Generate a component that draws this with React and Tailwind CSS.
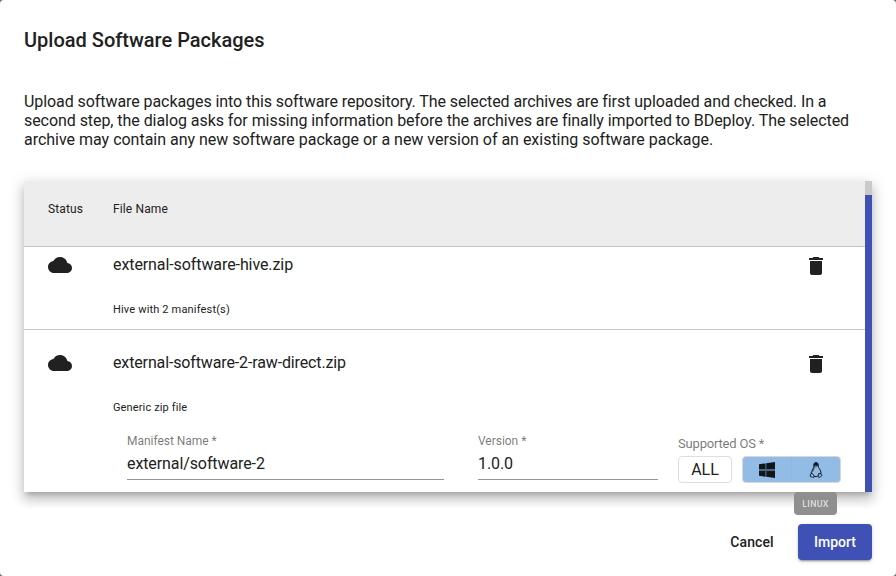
function CloudIcon() {
  return (
    <svg viewBox="0 0 24 24" className="size-6 shrink-0 fill-current">
      <path d="M19.35 10.04C18.67 6.59 15.64 4 12 4 9.11 4 6.6 5.64 5.35 8.04 2.34 8.36 0 10.91 0 14c0 3.31 2.69 6 6 6h13c2.76 0 5-2.24 5-5 0-2.64-2.05-4.78-4.65-4.96z" />
    </svg>
  );
}

function DeleteIcon() {
  return (
    <svg viewBox="0 0 24 24" className="size-6 shrink-0 fill-current">
      <path d="M6 19c0 1.1.9 2 2 2h8c1.1 0 2-.9 2-2V7H6v12zM19 4h-3.5l-1-1h-5l-1 1H5v2h14V4z" />
    </svg>
  );
}

function WindowsIcon() {
  return (
    <svg viewBox="0 0 16 16" className="size-4 fill-[#11161b]">
      <path d="M6.2 1.4l1.2-.2v13.7l-1.2-.2z" className="fill-[#3a5a73]" />
      <path d="M0 2.3l6.3-.9v6.2H0zM7.3 1.2L16 0v7.5H7.3zM0 8.5h6.3v6.2L0 13.8zM7.3 8.5H16V16l-8.7-1.2z" />
    </svg>
  );
}

function LinuxIcon() {
  return (
    <svg viewBox="0 0 16 16" className="size-4 fill-none stroke-[#11161b]" strokeWidth="1" strokeLinejoin="round" strokeLinecap="round">
      <path d="M5.9 3.1C5.9 1.3 6.6.5 8 .5s2.2 1 2.2 2.7c0 2 .5 2.5 1.4 3.9.8 1.3 1.5 2.7 1.4 4.2" />
      <path d="M5.9 3.1c.1 1.8.1 2.4-.9 3.7-.7 1-.9 2-1.4 3-.4.8-.5 1.2-.4 1.8" />
      <path d="M3.6 11.5c-.5.6-1.2.5-1.3 1 0 .6.1 1-.1 1.6-.1.7.9.7 1.8.9.9.3 1.7.6 2.1 0 .5-.9-.8-2-1.2-2.8-.4-.7-.8-1.2-1.3-.7z" />
      <path d="M12.7 11.5c.5.7.3 1 1 1.6.7.6-.2 1-1 1.5-.6.4-1.2 1.1-1.9.8-.8-.4-.4-1.6-.4-2.4 0-.8.1-1.7.5-1.8.5 1 1.2 1 1.8.3zM6.2 14.3c1.2.6 2.8.5 4-.5" />
      <path d="M6.2 1.5C6.7.5 9.2.3 9.8 1.7v2.8L9 3.2H6.8l-.5.9z" className="fill-[#11161b]" strokeWidth=".3" />
      <path d="M6.6 3.8c.6-.4 1.5-.6 2.5 0l-1.3.9zM6.4 5.8c-.6 1.1-1.2 2.3-1.5 3.6" strokeWidth=".6" />
    </svg>
  );
}

function FileLine({ name, info, tracking, infoTracking }) {
  return (
    <div className="flex pl-6 pr-[37px]">
      <div className="w-[65px]"><CloudIcon /></div>
      <div className="flex-1">
        <div className={`h-6 text-base leading-6 ${tracking}`}>{name}</div>
        <div className={`mt-[25px] text-[11px] leading-[16px] ${infoTracking}`}>{info}</div>
      </div>
      <button className="mt-px h-6"><DeleteIcon /></button>
    </div>
  );
}

function Field({ label, value, className }) {
  return (
    <label className={`flex h-12 flex-col border-b border-[#949494] ${className}`}>
      <span className="h-[18px] text-xs leading-[18px] tracking-[-0.03px] text-black/55">{label}</span>
      <span className="mt-[4px] text-base leading-[20px] tracking-[-0.1px]">{value}</span>
    </label>
  );
}

export default function App() {
  return (
    <div className="h-[576px] w-[896px] bg-[#6f6f6f] font-['Roboto',sans-serif] text-[#212121]">
      <div className="flex h-full flex-col overflow-hidden rounded-[4px] bg-white">
        <h1 className="px-6 pt-6 text-xl font-medium leading-8">Upload Software Packages</h1>
        <div className="mt-[20px] h-[432px] shrink-0 overflow-hidden px-6 pt-4">
          <p className="whitespace-nowrap text-base leading-[19px]">
            <span className="tracking-[-0.072px]">Upload software packages into this software repository. The selected archives are first uploaded and checked. In a</span><br />
            <span className="tracking-[-0.06px]">second step, the dialog asks for missing information before the archives are finally imported to BDeploy. The selected</span><br />
            <span className="tracking-[-0.015px]">archive may contain any new software package or a new version of an existing software package.</span>
          </p>
          <div className="mt-8 flex h-[311px] bg-white shadow-[0_5px_5px_-3px_rgba(0,0,0,.2),0_8px_10px_1px_rgba(0,0,0,.14),0_3px_14px_2px_rgba(0,0,0,.12)]">
            <div className="flex-1">
              <div className="flex h-[66px] border-b border-[#c6c6c6] bg-[#ededed] pl-6 pt-5 text-xs leading-4 tracking-[0.13px]">
                <span className="w-[65px]">Status</span>
                <span>File Name</span>
              </div>
              <div className="h-[83px] border-b border-[#c6c6c6] pt-[6px]">
                <FileLine name="external-software-hive.zip" info="Hive with 2 manifest(s)" tracking="tracking-[-0.09px]" infoTracking="tracking-[0.17px]" />
              </div>
              <div className="pt-[21px]">
                <FileLine name="external-software-2-raw-direct.zip" info="Generic zip file" tracking="tracking-[-0.135px]" infoTracking="tracking-[0.13px]" />
                <div className="mt-[16px] flex pl-[103px]">
                  <Field label="Manifest Name *" value="external/software-2" className="w-[317px]" />
                  <Field label="Version *" value="1.0.0" className="ml-[34px] w-[180px]" />
                  <div className="ml-5 pt-[3px]">
                    <div className="h-[21px] text-[13px] leading-[18px] tracking-[-0.18px] text-black/55">Supported OS *</div>
                    <div className="flex">
                      <button className="h-[27px] w-[54px] rounded-[4px] border border-[#dedede] text-base leading-[25px]">ALL</button>
                      <div className="ml-[10px] flex h-[27px] w-[99px] overflow-hidden rounded-[4px] border border-[#d8d8d8] bg-[#92bce6]">
                        <button className="flex w-[48px] items-center justify-center pt-px"><WindowsIcon /></button>
                        <button className="flex flex-1 items-center justify-center border-l border-[#8db7e1] pt-px"><LinuxIcon /></button>
                      </div>
                    </div>
                  </div>
                </div>
              </div>
            </div>
            <div className="w-[7px] bg-[#cacaca] pt-[14px]">
              <div className="h-full bg-[#3f51b5]" />
            </div>
          </div>
        </div>
        <div className="mt-4 flex justify-end pr-6 text-sm font-medium leading-9">
          <button className="w-[92px] tracking-[0.07px]">Cancel</button>
          <button className="h-9 w-[74px] rounded-[4px] bg-[#3f51b5] text-white shadow-[0_3px_1px_-2px_rgba(0,0,0,.2),0_2px_2px_rgba(0,0,0,.14),0_1px_5px_rgba(0,0,0,.12)]">Import</button>
        </div>
      </div>
      <div className="absolute left-[794px] top-[492px] h-[23px] w-[43px] rounded-[4px] bg-[#8f8f8f] text-center text-[9px] font-bold leading-[25px] tracking-[0.2px] text-[#d4d4d4]">
        <span className="inline-block blur-[0.45px]">LINUX</span>
      </div>
    </div>
  );
}
